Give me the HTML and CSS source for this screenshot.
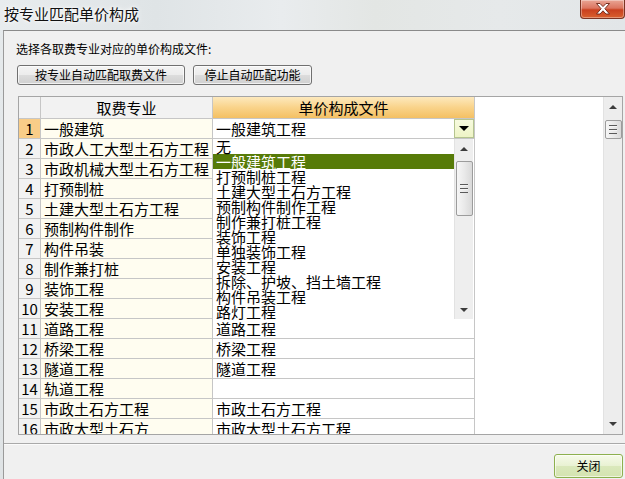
FILE: index.html
```html
<!DOCTYPE html>
<html lang="zh-CN">
<head>
<meta charset="utf-8">
<title>按专业匹配单价构成</title>
<link rel="stylesheet" href="styles.css">
</head>
<body>
<div class="window">
  <div class="titlebar">
    <span class="title">按专业匹配单价构成</span>
    <button class="close-x" aria-label="关闭">
      <svg width="16" height="12" viewBox="0 0 16 12"><path d="M1.5 0.5 L5 0.5 L8 3.6 L11 0.5 L14.5 0.5 L9.9 5.7 L14.5 11 L11 11 L8 7.8 L5 11 L1.5 11 L6.1 5.7 Z" fill="#fff" stroke="#6a2214" stroke-width="0.9" stroke-linejoin="round"/></svg>
    </button>
  </div>
  <div class="client">
    <div class="prompt">选择各取费专业对应的单价构成文件:</div>
    <div class="actions">
      <button class="btn btn-auto">按专业自动匹配取费文件</button>
      <button class="btn btn-stop">停止自动匹配功能</button>
    </div>
    <div class="table-box">
      <div class="grid">
        <div class="cell hnum"></div>
        <div class="cell hcol">取费专业</div>
        <div class="cell hcol hsel">单价构成文件</div>
        <div class="fill"></div>

        <div class="cell num cur">1</div><div class="cell c1">一般建筑</div>
        <div class="cell c2 combo"><span class="combo-text">一般建筑工程</span><span class="combo-btn"><i class="tri-down"></i></span></div><div class="fill"></div>

        <div class="cell num">2</div><div class="cell c1">市政人工大型土石方工程</div><div class="cell c2"></div><div class="fill"></div>
        <div class="cell num">3</div><div class="cell c1">市政机械大型土石方工程</div><div class="cell c2"></div><div class="fill"></div>
        <div class="cell num">4</div><div class="cell c1">打预制桩</div><div class="cell c2"></div><div class="fill"></div>
        <div class="cell num">5</div><div class="cell c1">土建大型土石方工程</div><div class="cell c2"></div><div class="fill"></div>
        <div class="cell num">6</div><div class="cell c1">预制构件制作</div><div class="cell c2"></div><div class="fill"></div>
        <div class="cell num">7</div><div class="cell c1">构件吊装</div><div class="cell c2"></div><div class="fill"></div>
        <div class="cell num">8</div><div class="cell c1">制作兼打桩</div><div class="cell c2"></div><div class="fill"></div>
        <div class="cell num">9</div><div class="cell c1">装饰工程</div><div class="cell c2"></div><div class="fill"></div>
        <div class="cell num">10</div><div class="cell c1">安装工程</div><div class="cell c2"></div><div class="fill"></div>
        <div class="cell num">11</div><div class="cell c1">道路工程</div><div class="cell c2">道路工程</div><div class="fill"></div>
        <div class="cell num">12</div><div class="cell c1">桥梁工程</div><div class="cell c2">桥梁工程</div><div class="fill"></div>
        <div class="cell num">13</div><div class="cell c1">隧道工程</div><div class="cell c2">隧道工程</div><div class="fill"></div>
        <div class="cell num">14</div><div class="cell c1">轨道工程</div><div class="cell c2"></div><div class="fill"></div>
        <div class="cell num">15</div><div class="cell c1">市政土石方工程</div><div class="cell c2">市政土石方工程</div><div class="fill"></div>
        <div class="cell num">16</div><div class="cell c1">市政大型土石方</div><div class="cell c2">市政大型土石方工程</div><div class="fill"></div>
      </div>
      <div class="vscroll main-scroll">
        <div class="sb-btn"><i class="tri-up"></i></div>
        <div class="thumb"><span class="grip"></span></div>
        <div class="sb-space"></div>
        <div class="sb-btn"><i class="tri-dn"></i></div>
      </div>

      <div class="dropdown">
        <ul class="items">
          <li>无</li>
          <li class="sel">一般建筑工程</li>
          <li>打预制桩工程</li>
          <li>土建大型土石方工程</li>
          <li>预制构件制作工程</li>
          <li>制作兼打桩工程</li>
          <li>装饰工程</li>
          <li>单独装饰工程</li>
          <li>安装工程</li>
          <li>拆除、护坡、挡土墙工程</li>
          <li>构件吊装工程</li>
          <li>路灯工程</li>
        </ul>
        <div class="vscroll list-scroll">
          <div class="sb-btn"><i class="tri-up"></i></div>
          <div class="thumb"><span class="grip"></span></div>
          <div class="sb-space"></div>
          <div class="sb-btn"><i class="tri-dn"></i></div>
        </div>
      </div>
    </div>
    <div class="separator"></div>
    <div class="footer">
      <button class="btn-close">关闭</button>
    </div>
  </div>
</div>
</body>
</html>
```

FILE: styles.css
```css
* { box-sizing: border-box; }
html, body { margin: 0; padding: 0; }
body {
  width: 625px;
  height: 479px;
  overflow: hidden;
  font-family: "Noto Sans CJK SC", "Liberation Sans", sans-serif;
  color: #000;
}
.window {
  width: 625px;
  height: 479px;
  display: flex;
  flex-direction: column;
  background: linear-gradient(to bottom, #e6eaec, #dfe3e5);
}
.titlebar {
  height: 30px;
  display: flex;
  justify-content: space-between;
  align-items: flex-start;
  background: linear-gradient(to right, #e8ecee 0%, #dfe4e6 25%, #e9ecee 45%, #e3e6e4 60%, #e6e9ea 80%, #e2e6e8 100%);
}
.title {
  padding: 5px 0 0 4px;
  font-size: 15px;
  line-height: 18px;
  color: #111;
  text-shadow: 0 0 6px #fff, 0 0 3px #fff;
}
.close-x {
  width: 45px;
  height: 19px;
  margin: 0;
  padding: 0;
  border: 1px solid #7b3424;
  border-top: none;
  border-radius: 0 0 4px 4px;
  background: linear-gradient(to bottom, #e9a595 0%, #dc7560 45%, #c9401f 55%, #d9602e 100%);
  display: flex;
  align-items: center;
  justify-content: center;
  box-shadow: inset 0 0 0 1px rgba(255,255,255,0.35);
}
.close-x svg { display: block; }

.client {
  flex: 1;
  margin-left: 3px;
  border-left: 1px solid #9a9a9a;
  border-top: 1px solid #8a8a8a;
  background: #f0f0f0;
  display: flex;
  flex-direction: column;
}
.prompt {
  margin: 10px 0 0 12px;
  font-size: 12px;
  line-height: 16px;
}
.actions {
  display: flex;
  gap: 8px;
  margin: 8px 0 0 13px;
}
.btn {
  height: 20px;
  padding: 0;
  font-family: inherit;
  font-size: 12px;
  line-height: 18px;
  color: #000;
  border: 1px solid #707070;
  border-radius: 3px;
  background: linear-gradient(to bottom, #f4f4f4 0%, #ececec 48%, #dcdcdc 52%, #d0d0d0 100%);
  box-shadow: inset 0 0 0 1px rgba(255,255,255,0.7);
}
.btn-auto { width: 168px; }
.btn-stop { width: 119px; }

.table-box {
  position: relative;
  margin: 11px 0 0 14px;
  width: 605px;
  height: 339px;
  border: 1px solid #a5a5a5;
  display: flex;
  background: #fff;
}
.grid {
  flex: 1;
  height: 337px;
  overflow: hidden;
  display: grid;
  grid-template-columns: 22px 172px 262px 1fr;
  grid-template-rows: 22px;
  grid-auto-rows: 20px;
  align-content: start;
}
.cell {
  border-right: 1px solid #c6c6c6;
  border-bottom: 1px solid #c6c6c6;
  font-size: 15px;
  line-height: 19px;
  white-space: nowrap;
  overflow: hidden;
}
.fill { background: #fff; }
.hnum { background: #f2f2f2; }
.hcol {
  background: #f2f2f2;
  text-align: center;
  line-height: 21px;
}
.hsel {
  background: linear-gradient(to bottom, #fde9bd 0%, #f9d38a 50%, #f4c063 100%);
}
.num {
  background: #f2f2f2;
  text-align: center;
  letter-spacing: 0;
}
.num.cur { background: #f9cd88; }
.c1 {
  background: #fffdf0;
  padding-left: 3px;
}
.c2 {
  background: #fff;
  padding-left: 3px;
}
.combo {
  display: flex;
  justify-content: space-between;
  align-items: flex-start;
  padding-right: 0;
}
.combo-btn {
  width: 20px;
  height: 19px;
  border: 1px solid #b5c48f;
  background: linear-gradient(to bottom, #f7fadf, #eef4c6);
  display: flex;
  align-items: center;
  justify-content: center;
}
.tri-down {
  width: 0;
  height: 0;
  border-left: 5px solid transparent;
  border-right: 5px solid transparent;
  border-top: 5px solid #000;
}

.vscroll {
  width: 19px;
  display: flex;
  flex-direction: column;
  align-items: center;
  background: #ededed;
  border-left: 1px solid #e2e2e2;
}
.main-scroll { height: 337px; }
.sb-btn {
  width: 100%;
  height: 20px;
  display: flex;
  align-items: center;
  justify-content: center;
}
.tri-up {
  width: 0;
  height: 0;
  border-left: 4px solid transparent;
  border-right: 4px solid transparent;
  border-bottom: 4px solid #3c3c3c;
}
.tri-dn {
  width: 0;
  height: 0;
  border-left: 4px solid transparent;
  border-right: 4px solid transparent;
  border-top: 4px solid #3c3c3c;
}
.thumb {
  width: 17px;
  height: 19px;
  margin-top: 3px;
  border: 1px solid #9c9c9c;
  border-radius: 2px;
  background: linear-gradient(to right, #f6f6f6 0%, #e9e9e9 50%, #d9d9d9 100%);
  display: flex;
  align-items: center;
  justify-content: center;
}
.grip {
  width: 8px;
  height: 9px;
  background: repeating-linear-gradient(to bottom, #5a5a5a 0, #5a5a5a 1px, #f4f4f4 1px, #f4f4f4 2px, transparent 2px, transparent 4px);
}
.sb-space { flex: 1; }

.dropdown {
  position: absolute;
  left: 194px;
  top: 42px;
  width: 261px;
  height: 180px;
  background: #fff;
  display: flex;
}
.items {
  flex: 1;
  margin: 0;
  padding: 0;
  list-style: none;
}
.items li {
  height: 15px;
  font-size: 15px;
  line-height: 15px;
  padding-left: 3px;
  white-space: nowrap;
}
.items li.sel {
  background: #577b08;
  color: #fff;
}
.list-scroll {
  height: 180px;
  margin-right: 1px;
  background: #eeeeee;
}
.list-scroll .sb-btn { height: 19px; }
.list-scroll .thumb { height: 55px; }

.separator {
  margin-top: 8px;
  height: 2px;
  border-top: 1px solid #a9a9a9;
  border-bottom: 1px solid #fbfbfb;
}
.footer {
  display: flex;
  justify-content: flex-end;
  padding: 9px 2px 0 0;
}
.btn-close {
  width: 69px;
  height: 24px;
  padding: 0;
  font-family: inherit;
  font-size: 12px;
  line-height: 22px;
  color: #000;
  border: 1px solid #8db04e;
  border-radius: 3px;
  background: linear-gradient(to bottom, #f6faea 0%, #e9f2d3 48%, #dae8bb 52%, #d4e4b0 100%);
  box-shadow: inset 0 0 0 1px rgba(255,255,255,0.6);
}
```
